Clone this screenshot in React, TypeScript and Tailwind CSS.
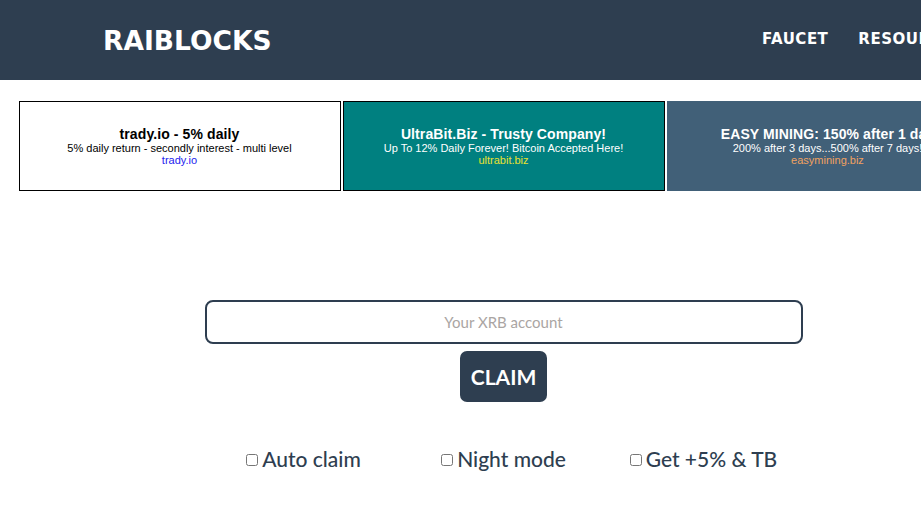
export default function App() {
  const ads = [
    {
      title: 'trady.io - 5% daily',
      text: '5% daily return - secondly interest - multi level',
      url: 'trady.io',
      box: 'bg-white border border-black text-black',
      link: 'text-[#2222ee]',
    },
    {
      title: 'UltraBit.Biz - Trusty Company!',
      text: 'Up To 12% Daily Forever! Bitcoin Accepted Here!',
      url: 'ultrabit.biz',
      box: 'bg-[#008080] border border-black text-white',
      link: 'text-[#e8e030]',
    },
    {
      title: 'EASY MINING: 150% after 1 day',
      text: '200% after 3 days...500% after 7 days!',
      url: 'easymining.biz',
      box: 'bg-[#416078] text-white',
      link: 'text-[#f0a060]',
    },
  ];

  const options = ['Auto claim', 'Night mode', 'Get +5% & TB'];

  return (
    <div className="w-full min-h-[516px] overflow-hidden bg-white">
      <div className="w-[1007px]">
        {/* Header */}
        <header className="h-20 bg-[#2e3e50] flex items-center justify-between pl-[103px] text-white font-['DejaVu_Sans',sans-serif] font-bold">
          <div className="text-[26.5px] leading-none mt-[2px]">RAIBLOCKS</div>
          <nav className="flex gap-[30px] text-[15px] tracking-[0.5px] leading-none pr-[43px] mt-[-2px]">
            <a>FAUCET</a>
            <a>RESOURCES</a>
          </nav>
        </header>

        {/* Ads */}
        <div className="flex justify-center gap-[2px] mt-[21px] font-['Liberation_Sans',sans-serif]">
          {ads.map((ad) => (
            <div
              key={ad.url}
              className={`w-[322px] h-[90px] flex flex-col items-center justify-center text-center ${ad.box}`}
            >
              <div className="text-[14px] tracking-[0.1px] font-bold leading-[16px] whitespace-nowrap">{ad.title}</div>
              <div className="text-[11px] leading-[12px] whitespace-nowrap">{ad.text}</div>
              <div className={`text-[11px] leading-[12px] ${ad.link}`}>{ad.url}</div>
            </div>
          ))}
        </div>

        {/* Form */}
        <div className="flex flex-col items-center mt-[109px] font-['Lato',sans-serif]">
          <input
            className="w-[598px] h-[44px] border-2 border-[#2e3e50] rounded-[8px] text-center text-[15px] outline-none placeholder:text-[#aaa5a3]"
            placeholder="Your XRB account"
          />
          <button className="mt-[7px] w-[87px] h-[51px] bg-[#2e3e50] text-white rounded-[7px] text-[21px] font-bold">
            CLAIM
          </button>

          <div className="flex mt-[41px]">
            {options.map((o) => (
              <label key={o} className="w-[200px] flex items-center justify-center gap-[4px] text-[21px] font-medium text-[#2e3e50]">
                <input type="checkbox" className="w-[12px] h-[12px] mt-[2px]" />
                <span>{o}</span>
              </label>
            ))}
          </div>
        </div>
      </div>
    </div>
  );
}
